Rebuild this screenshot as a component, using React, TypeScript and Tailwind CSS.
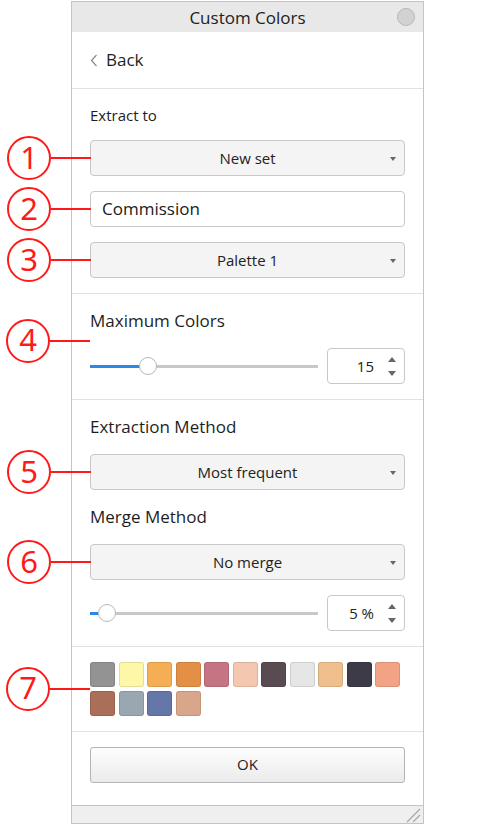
import React from "react";

function Ann({ n }: { n: number }) {
  return (
    <div className="absolute right-full top-1/2 -translate-y-1/2 flex items-center pointer-events-none">
      <div className="w-[44px] h-[44px] rounded-full border-2 border-[#ff1a1a] flex items-center justify-center text-[31px] text-[#ff1a1a] leading-none font-['Noto_Sans',sans-serif]">
        <span className="-mt-[2px]">{n}</span>
      </div>
      <div className="w-[40px] h-[2px] bg-[#ff1a1a]" />
    </div>
  );
}

function Select({ label, ann }: { label: string; ann?: number }) {
  return (
    <div className="relative h-[36px] rounded-[4px] border border-[#c8c8c8] bg-[#f4f4f4] flex items-center justify-center text-[15px] text-[#222]">
      {label}
      <span className="absolute right-[8px] top-[16px] w-0 h-0 border-x-[3.5px] border-x-transparent border-t-[4px] border-t-[#666]" />
      {ann !== undefined && <Ann n={ann} />}
    </div>
  );
}

function Slider({ pct }: { pct: number }) {
  return (
    <div className="relative flex-1 h-[18px] flex items-center">
      <div className="w-full h-[3px] bg-[#c8c8c8]" />
      <div className="absolute left-0 h-[3px] bg-[#2b88e6]" style={{ width: `${pct}%` }} />
      <div
        className="absolute w-[18px] h-[18px] rounded-full bg-white border border-[#b8b8b8] -translate-x-1/2"
        style={{ left: `${pct}%` }}
      />
    </div>
  );
}

function NumBox({ value }: { value: string }) {
  return (
    <div className="w-[78px] h-[36px] rounded-[4px] border border-[#c8c8c8] bg-white flex items-center text-[15px] text-[#222]">
      <span className="flex-1 text-right pr-[6px]">{value}</span>
      <div className="w-[24px] flex flex-col items-center gap-[9px]">
        <span className="w-0 h-0 border-x-[4px] border-x-transparent border-b-[5px] border-b-[#666]" />
        <span className="w-0 h-0 border-x-[4px] border-x-transparent border-t-[5px] border-t-[#666]" />
      </div>
    </div>
  );
}

const swatches = [
  "#939393",
  "#fef7a8",
  "#f6ae55",
  "#e48f46",
  "#c47483",
  "#f4c7b0",
  "#5a4b52",
  "#e6e6e6",
  "#efc08e",
  "#3d3b47",
  "#f2a285",
  "#ab6e58",
  "#98a7b1",
  "#6577aa",
  "#d8a688",
];

export default function App() {
  return (
    <div className="w-[500px] h-[825px] bg-white pt-px font-['Open_Sans',sans-serif] text-[#1e1e1e]">
      <div className="ml-[71px] w-[353px] border border-[#c4c4c4] bg-white">
        {/* Title bar */}
        <div className="relative h-[30px] bg-[#e8e8e8] flex items-center justify-center text-[17px] text-[#222] pt-[2px]">
          Custom Colors
          <div className="absolute right-[8px] top-[6px] w-[18px] h-[18px] rounded-full bg-[#d2d2d2] border border-[#b8b8b8]" />
        </div>
        {/* Back */}
        <div className="h-[57px] border-b border-[#e2e2e2] px-[18px] flex items-center gap-[8px] text-[17px]">
          <svg width="8" height="13" viewBox="0 0 8 13" className="mt-[1px]">
            <polyline points="6.5,1 1.5,6.5 6.5,12" fill="none" stroke="#8a8a8a" strokeWidth="1.2" />
          </svg>
          <span>Back</span>
        </div>
        {/* Extract to */}
        <div className="px-[18px] pt-[16px] pb-[15px] border-b border-[#e2e2e2] flex flex-col">
          <div className="text-[15px] leading-[20px]">Extract to</div>
          <div className="mt-[15px]">
            <Select label="New set" ann={1} />
          </div>
          <div className="relative mt-[15px] h-[36px] rounded-[4px] border border-[#c8c8c8] bg-white flex items-center px-[11px] text-[17px] text-[#1a1a1a]">
            Commission
            <Ann n={2} />
          </div>
          <div className="mt-[15px]">
            <Select label="Palette 1" ann={3} />
          </div>
        </div>
        {/* Maximum colors */}
        <div className="relative px-[18px] pt-[15px] pb-[15px] border-b border-[#e2e2e2] flex flex-col">
          <div className="text-[17px] leading-[24px]">Maximum Colors</div>
          <div className="relative h-[15px]">
            <Ann n={4} />
          </div>
          <div className="h-[36px] flex items-center gap-[9px]">
            <Slider pct={25.5} />
            <NumBox value="15" />
          </div>
        </div>
        {/* Methods */}
        <div className="px-[18px] pt-[15px] pb-[15px] border-b border-[#e2e2e2] flex flex-col">
          <div className="text-[17px] leading-[24px]">Extraction Method</div>
          <div className="mt-[15px]">
            <Select label="Most frequent" ann={5} />
          </div>
          <div className="mt-[15px] text-[17px] leading-[24px]">Merge Method</div>
          <div className="mt-[15px]">
            <Select label="No merge" ann={6} />
          </div>
          <div className="mt-[15px] h-[36px] flex items-center gap-[9px]">
            <Slider pct={7.5} />
            <NumBox value="5 %" />
          </div>
        </div>
        {/* Swatches */}
        <div className="px-[18px] pt-[15px] pb-[15px] border-b border-[#e2e2e2]">
          <div className="relative flex flex-wrap gap-[3.5px] w-[312px]">
            {swatches.map((c, i) => (
              <div
                key={i}
                className="w-[25px] h-[25px] rounded-[3px] border border-black/10"
                style={{ backgroundColor: c }}
              />
            ))}
            <Ann n={7} />
          </div>
        </div>
        {/* OK */}
        <div className="px-[18px] pt-[15px] pb-[22px]">
          <div className="h-[36px] rounded-[3px] border border-[#b4b4b4] bg-gradient-to-b from-[#fdfdfd] to-[#ebebeb] flex items-center justify-center text-[15px] text-[#222]">
            OK
          </div>
        </div>
        {/* Status bar */}
        <div className="relative h-[18px] border-t border-[#c4c4c4] bg-[#efefef]">
          <svg width="16" height="16" viewBox="0 0 16 16" className="absolute right-[2px] bottom-0">
            <line x1="2" y1="15" x2="15" y2="2" stroke="#a8a8a8" strokeWidth="1.2" />
            <line x1="8" y1="15" x2="15" y2="8" stroke="#a8a8a8" strokeWidth="1.2" />
          </svg>
        </div>
      </div>
    </div>
  );
}
